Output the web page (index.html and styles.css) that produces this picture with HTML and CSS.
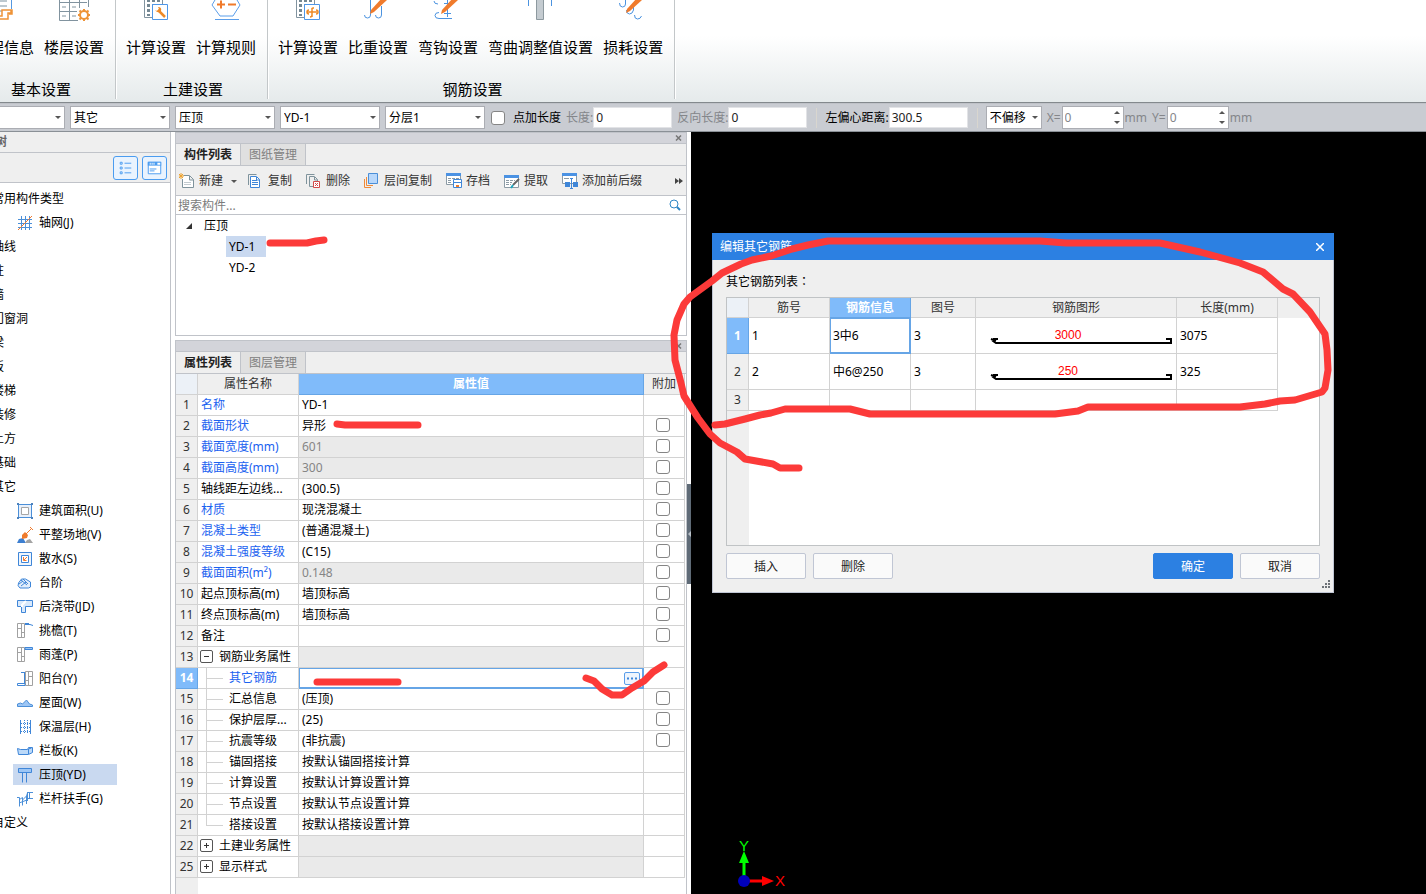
FILE: index.html
```html
<!DOCTYPE html>
<html lang="zh-CN">
<head>
<meta charset="utf-8">
<title>构件属性</title>
<link rel="stylesheet" href="styles.css">
</head>
<body>
<div class="app">
  <header class="ribbon">
    <section class="ribbon-group ribbon-group-first">
      <div class="ribbon-tools">
        <button class="ribbon-tool"><svg class="ribbon-icon" viewBox="0 0 32 21"><path d="M6 1h13M6 6h13M6 11h9" fill="none" stroke="#7d929f"/><path d="M2.500 0V17.500H14M23.500 0v9" fill="none" stroke="#5598e0"/><path d="M14 10h9v3h-3v6h-9v-3h3z M21 10h3v4h-3" fill="#fff" stroke="#ee9337" stroke-width="1.500"/></svg>工程信息</button>
        <button class="ribbon-tool"><svg class="ribbon-icon" viewBox="0 0 32 21"><path d="M1.500 0V20.500H20M11.500 0V20M30.500 0V7M21.500 0V8M1 2.500h28M1 11.500h18M4 7h4M4 16h4M14 7h4M14 16h4" fill="none" stroke="#81939f"/><circle cx="26" cy="15" r="4" fill="#fff" stroke="#ee9337" stroke-width="2"/><path d="M26 9v2M26 19v2M20 15h2M30 15h2M21.500 10.500l1.500 1.500M29 18l1.500 1.500M30.500 10.500L29 12M23 18l-1.500 1.500" stroke="#ee9337" stroke-width="2"/></svg>楼层设置</button>
      </div>
      <h2 class="ribbon-caption">基本设置</h2>
    </section>
    <section class="ribbon-group">
      <div class="ribbon-tools">
        <button class="ribbon-tool"><svg class="ribbon-icon" viewBox="0 0 32 21"><path d="M4.500 0V17.500H12M22.500 0V5" fill="none" stroke="#81939f"/><path d="M7 0h3v2H7zM12 0h3v2h-3zM17 0h3v2h-3zM7 4h3v3H7zM12 4h3v3h-3zM17 4h3v1h-3zM7 9h3v3H7zM7 14h3v2H7z" fill="#748792"/><path d="M12.500 4.500h15v15h-15z" fill="#fff" stroke="#4f97e8"/><path d="M18 10l7 7" stroke="#ee8a27" stroke-width="2.500"/><path d="M15 10l2 1 2-2-1-2q4 0 3 4-3 3-6-1z" fill="#ee8a27"/></svg>计算设置</button>
        <button class="ribbon-tool"><svg class="ribbon-icon" viewBox="0 0 32 21"><path d="M5 0l-3 5 8 11h13l7-11-3-5M5 19.500h24" fill="none" stroke="#5b9eea"/><path d="M7 4.500h8M11 .5v8M18 4.500h8" stroke="#f07a2b" stroke-width="2"/></svg>计算规则</button>
      </div>
      <h2 class="ribbon-caption">土建设置</h2>
    </section>
    <section class="ribbon-group">
      <div class="ribbon-tools">
        <button class="ribbon-tool"><svg class="ribbon-icon" viewBox="0 0 32 21"><path d="M4.500 0V17.500H12M22.500 0V5" fill="none" stroke="#81939f"/><path d="M7 0h3v2H7zM12 0h3v2h-3zM17 0h3v2h-3zM7 4h3v3H7zM12 4h3v3h-3zM17 4h3v1h-3zM7 9h3v3H7zM7 14h3v2H7z" fill="#748792"/><path d="M12.500 4.500h15v15h-15z" fill="#fff" stroke="#4f97e8"/><path d="M20 8v9M22 8h-1q-1 0-1 1M20 15q0 2-2 2M15 12h10M17 10q-2 0-2 2t2 2M24 10q2 0 2 2t-2 2" fill="none" stroke="#ee8a27" stroke-width="1.500"/></svg>计算设置</button>
        <button class="ribbon-tool"><svg class="ribbon-icon" viewBox="0 0 32 21"><path d="M8.500 0v15q0 3-3 3t-3-3M19.500 6v9q0 3-3 3t-3-3" fill="none" stroke="#4b93e0"/><path d="M20-2l5 2L12 12l-4 2 1-4z" fill="#f07b2c"/></svg>比重设置</button>
        <button class="ribbon-tool"><svg class="ribbon-icon" viewBox="0 0 32 21"><path d="M6 4q-4 0-4-3M7 12.500q-4 0-4 3t4 3h13M15.500 0v17M12 3.500h7M12 13.500h7" fill="none" stroke="#4b93e0"/><path d="M21-2l5 2L13 12l-4 2 1-4z" fill="#f07b2c"/></svg>弯钩设置</button>
        <button class="ribbon-tool"><svg class="ribbon-icon" viewBox="0 0 32 21"><path d="M3.500 0v6M26.500 0v6" stroke="#4b93e0"/><path d="M11.500-2h7v21.500h-7z" fill="#c4cbd0" stroke="#8d999f"/></svg>弯曲调整值设置</button>
        <button class="ribbon-tool"><svg class="ribbon-icon" viewBox="0 0 32 21"><path d="M2.500 3q0 4 3 4t3-3V0M9.500 10q0 4 3 4t4-4V7M17.500 15q0 4 3 4t4-3" fill="none" stroke="#4b93e0"/><path d="M20-2l5 2L13 11l-4 2 1-4z" fill="#f07b2c"/></svg>损耗设置</button>
      </div>
      <h2 class="ribbon-caption">钢筋设置</h2>
    </section>
  </header>

  <form class="options">
    <label class="combo combo-first"><select aria-label="楼层"><option></option></select></label>
    <label class="combo"><select aria-label="类别"><option>其它</option></select></label>
    <label class="combo"><select aria-label="构件类型"><option>压顶</option></select></label>
    <label class="combo"><select aria-label="构件"><option>YD-1</option></select></label>
    <label class="combo"><select aria-label="分层"><option>分层1</option></select></label>
    <label class="option-check"><input class="box" type="checkbox">点加长度</label>
    <label class="option-field muted">长度:<input value="0"></label>
    <label class="option-field muted">反向长度:<input value="0"></label>
    <span class="option-rule"></span>
    <label class="option-field">左偏心距离:<input value="300.5"></label>
    <span class="option-rule"></span>
    <label class="combo combo-short"><select aria-label="偏移"><option>不偏移</option></select></label>
    <label class="option-spin muted">X=<span class="spin"><input value="0"></span>mm</label>
    <label class="option-spin muted">Y=<span class="spin"><input value="0"></span>mm</label>
  </form>

  <main class="workspace">
    <aside class="nav">
      <h2 class="nav-title">导航树</h2>
      <div class="nav-views">
        <button class="view-button" aria-label="列表"><svg viewBox="0 0 24 24"><path d="M6.500 5.500h2v2h-2zM6.500 10.500h2v2h-2zM6.500 15.500h2v2h-2z" fill="none" stroke="#4a9cf0"/><path d="M11 6.500h7M11 11.500h7M11 16.500h7" stroke="#4a9cf0"/></svg></button>
        <button class="view-button" aria-label="面板"><svg viewBox="0 0 24 24"><path d="M5.500 5.500h13v12h-13z" fill="#fff" stroke="#4a9cf0"/><path d="M5 5h14v4H5z" fill="#4a9cf0"/><path d="M7 7h1M9 7h1M11 7h1M15 7h3" stroke="#fff" stroke-width="2"/><path d="M7 12.500h7M7 14.500h5" stroke="#4a9cf0"/></svg></button>
      </div>
      <ul class="nav-tree">
        <li class="nav-root">常用构件类型</li>
        <li><a class="nav-item" href="#"><svg viewBox="0 0 16 16"><path d="M4.500 1v14M8.500 1v14M12.500 1v14M1 4.500h14M1 8.500h14M1 12.500h14" stroke="#4b8fd8"/><path d="M1 15L15 1" stroke="#ef7b31"/></svg>轴网(J)</a></li>
        <li class="nav-root">轴线</li>
        <li class="nav-root">柱</li>
        <li class="nav-root">墙</li>
        <li class="nav-root">门窗洞</li>
        <li class="nav-root">梁</li>
        <li class="nav-root">板</li>
        <li class="nav-root">楼梯</li>
        <li class="nav-root">装修</li>
        <li class="nav-root">土方</li>
        <li class="nav-root">基础</li>
        <li class="nav-root">其它</li>
        <li><a class="nav-item" href="#"><svg viewBox="0 0 16 16"><path d="M1.500 1.500h13v13h-13z" fill="#e8f0fb" stroke="#4b8fd8"/><path d="M4.500 4.500h7v7h-7z" fill="#fff" stroke="#a6a6a6"/><path d="M0 0h2v2H0zM14 0h2v2h-2zM0 14h2v2H0zM14 14h2v2h-2z" fill="#4d82bd"/></svg>建筑面积(U)</a></li>
        <li><a class="nav-item" href="#"><svg viewBox="0 0 16 16"><path d="M0 16l2-4 4-1 3 5z" fill="#3d7fd0"/><path d="M8 16l2-3 3-1 3 4z" fill="#a3a3a3"/><path d="M5 8l3-3 3 3-1 3-5 1z" fill="#f07b2c"/><path d="M9 7l5-5M13 0l3 3" stroke="#f07b2c"/></svg>平整场地(V)</a></li>
        <li><a class="nav-item" href="#"><svg viewBox="0 0 16 16"><path d="M1.500 1.500h13v13h-13z" fill="#eef5fd" stroke="#3f86d8"/><path d="M4.500 4.500h7v7h-7z" fill="#fff" stroke="#3f86d8"/><path d="M10 6L7 9M6.500 6v3.500h3" fill="none" stroke="#ef7b31"/></svg>散水(S)</a></li>
        <li><a class="nav-item" href="#"><svg viewBox="0 0 16 16"><path d="M1.500 8l3-4h4l5 3v5l-2 1H3q-3-2-1.500-5zM4 5l6 5M6 4l5 5M2 9l4-3M4 11l5-4" fill="#e2eefb" stroke="#3f86d8"/></svg>台阶</a></li>
        <li><a class="nav-item" href="#"><svg viewBox="0 0 16 16"><path d="M.5 1.500h15v6H8.500v6h-4v-6h-4z" fill="#d9e9fb" stroke="#3f86d8"/><path d="M9 2L5 6v2" fill="none" stroke="#fff" stroke-width="2"/></svg>后浇带(JD)</a></li>
        <li><a class="nav-item" href="#"><svg viewBox="0 0 16 16"><path d="M.5.5h7v14h-7zM4.500 0v15M1 5.500h3M4 9.500h3" fill="none" stroke="#a1a1a1"/><path d="M8 1.500h5l3 1M8 .5h4" fill="none" stroke="#3f86d8"/></svg>挑檐(T)</a></li>
        <li><a class="nav-item" href="#"><svg viewBox="0 0 16 16"><path d="M.5.5h7v14h-7zM4.500 0v15M1 5.500h3M4 9.500h3" fill="none" stroke="#a1a1a1"/><path d="M8 .5h7.500v2H8z" fill="#9dc6f5" stroke="#3f86d8"/></svg>雨蓬(P)</a></li>
        <li><a class="nav-item" href="#"><svg viewBox="0 0 16 16"><path d="M8.500.5h7v14h-7zM11.500 0v15M12 5.500h3M8 9.500h3" fill="none" stroke="#a1a1a1"/><path d="M4 1.500h4M.5 12.500H8v2H.5zM7.500 2v11" fill="none" stroke="#3f86d8"/></svg>阳台(Y)</a></li>
        <li><a class="nav-item" href="#"><svg viewBox="0 0 16 16"><path d="M.5 11.500V9l3-1 2 1 4-4 3 4 3 1v1.500z" fill="#9dc6f5" stroke="#4b8fd8"/></svg>屋面(W)</a></li>
        <li><a class="nav-item" href="#"><svg viewBox="0 0 16 16"><path d="M3.500 1v14M13.500 1v14" stroke="#3f86d8"/><path d="M7.500 1v14M10.500 1v14M4 4.500h9M4 8.500h9M4 12.500h9" stroke="#3f86d8" stroke-dasharray="1 1"/></svg>保温层(H)</a></li>
        <li><a class="nav-item" href="#"><svg viewBox="0 0 16 16"><path d="M.5 5.500l3 1h7l1-2h4v5l-4 2h-10zM11.500 11V6l3-1" fill="#bcd9f8" stroke="#3f86d8"/></svg>栏板(K)</a></li>
        <li><a class="nav-item nav-item-on" href="#"><svg viewBox="0 0 16 16"><path d="M1.500 1.500h13v4h-13z" fill="#9dc6f5" stroke="#3f86d8"/><path d="M5.500 6v9.500M9.500 6v9.500" stroke="#3f86d8"/></svg>压顶(YD)</a></li>
        <li><a class="nav-item" href="#"><svg viewBox="0 0 16 16"><path d="M0 6.500h2.500v9M2.500 8.500l3-2v8M5.500 9l4-4v8M9.500 5l1-3v8M10 1.500h6M12.500 2v6M10 7.500h6M2 12l8-3" fill="none" stroke="#4b8fd8"/></svg>栏杆扶手(G)</a></li>
        <li class="nav-root">自定义</li>
      </ul>
    </aside>

    <div class="docks">
      <section class="dock dock-list">
        <div class="dock-bar"><button class="dock-close" aria-label="关闭"><svg viewBox="0 0 7 6"><path d="M1 .5l5 5M6 .5l-5 5" stroke="#777" stroke-width="1.500"/></svg></button></div>
        <div class="tabs"><button class="tab tab-on">构件列表</button><button class="tab">图纸管理</button></div>
        <div class="tools">
          <button class="tool tool-new"><svg viewBox="0 0 16 16"><path d="M4.500 2.500h6l4 4v8H3.500V6M10.500 3v4h4" fill="#fff" stroke="#7f939c"/><path d="M5 9.500h7M5 11.500h7" stroke="#c2cacf"/><path d="M0 1l4 4M4 1L0 5M2 0v6M0 3h5" stroke="#eea32f"/></svg>新建<i class="caret"></i></button>
          <button class="tool"><svg viewBox="0 0 16 16"><path d="M.5 12V1.500h8" fill="none" stroke="#7f939c"/><path d="M2.500 3.500h6l3 3v8h-9z" fill="#fff" stroke="#3f86d8"/><path d="M4 7.500h5M4 9.500h6M4 11.500h6M8.500 4v3h3" fill="none" stroke="#3f86d8"/></svg>复制</button>
          <button class="tool"><svg viewBox="0 0 16 16"><path d="M.5 11V1.500h8M7 13.500H3.500v-10h5l3 3V8M8.500 4v3h3" fill="none" stroke="#7f939c"/><path d="M7.500 8.500h6v6h-6z" fill="#fff" stroke="#d44a4a"/><path d="M9 10l3 3M12 10l-3 3" stroke="#d44a4a"/></svg>删除</button>
          <button class="tool"><svg viewBox="0 0 16 16"><path d="M4.500.5h9v10h-9z" fill="#b9d8fb" stroke="#4b8fd8"/><path d="M2.500 4v8.500H9M.5 6v8.500H7" fill="none" stroke="#ee8a3a"/></svg>层间复制</button>
          <button class="tool"><svg viewBox="0 0 16 16"><path d="M.5.500h14v11h-14z" fill="#fff" stroke="#8c9ba5"/><path d="M0 0h15v3H0z" fill="#4b92e3"/><path d="M2 5.500h11M2 7.500h4M2 9.500h4" stroke="#8c9ba5" stroke-dasharray="3 1"/><path d="M7.500 6.500h8v8h-8z" fill="#fff" stroke="#3f86d8"/><path d="M8 9.500h7" stroke="#3f86d8"/><path d="M10 12h3v2h-3z" fill="#ee7b2b"/></svg>存档</button>
          <button class="tool"><svg viewBox="0 0 16 16"><path d="M.5 2.500h14v12H.5z" fill="#fff" stroke="#8c9ba5"/><path d="M0 2h15v3H0z" fill="#4b92e3"/><path d="M2 7.500h9M2 9.500h6M2 11.500h5" stroke="#8c9ba5" stroke-dasharray="3 1"/><path d="M15 6l-6 6" stroke="#666" stroke-width="2"/><path d="M9 12l-2 3" stroke="#1ea7c0" stroke-width="2"/></svg>提取</button>
          <button class="tool"><svg viewBox="0 0 16 16"><path d="M.5.500h14v10h-14z" fill="#fff" stroke="#8c9ba5"/><path d="M0 0h15v3H0z" fill="#4b92e3"/><path d="M2 5.500h5" stroke="#8c9ba5"/><path d="M3 9h5v5H3zM11 9h5v5h-5z" fill="#3f86d8"/><path d="M9.500 6v9M8 5.500h3M8 15.500h3" stroke="#3f86d8"/></svg>添加前后缀</button>
          <button class="more" aria-label="更多"><svg viewBox="0 0 8 6"><path d="M0 0l4 3-4 3zM4 0l4 3-4 3z" fill="#444"/></svg></button>
        </div>
        <label class="search"><input placeholder="搜索构件..." aria-label="搜索构件"><svg viewBox="0 0 12 12"><circle cx="5" cy="5" r="4" fill="none" stroke="#2f86c5"/><path d="M8 8l3 3" stroke="#2f86c5" stroke-width="2"/></svg></label>
        <ul class="parts">
          <li class="parts-root"><svg viewBox="0 0 6 6"><path d="M6 0v6H0z" fill="#333"/></svg>压顶</li>
          <li><button class="part part-on">YD-1</button></li>
          <li><button class="part">YD-2</button></li>
        </ul>
      </section>

      <section class="dock dock-props">
        <div class="dock-bar"><button class="dock-close" aria-label="关闭"><svg viewBox="0 0 7 6"><path d="M1 .5l5 5M6 .5l-5 5" stroke="#777" stroke-width="1.500"/></svg></button></div>
        <div class="tabs"><button class="tab tab-on">属性列表</button><button class="tab">图层管理</button></div>
        <div class="props-wrap">
          <table class="props">
            <colgroup><col class="col-num"><col class="col-name"><col><col class="col-extra"></colgroup>
            <thead><tr><th class="corner"></th><th>属性名称</th><th class="head-on">属性值</th><th>附加</th></tr></thead>
            <tbody>
              <tr><th>1</th><td class="key">名称</td><td>YD-1</td><td></td></tr>
              <tr><th>2</th><td class="key">截面形状</td><td>异形</td><td><input class="box" type="checkbox" aria-label="截面形状"></td></tr>
              <tr><th>3</th><td class="key">截面宽度(mm)</td><td class="locked">601</td><td><input class="box" type="checkbox" aria-label="截面宽度"></td></tr>
              <tr><th>4</th><td class="key">截面高度(mm)</td><td class="locked">300</td><td><input class="box" type="checkbox" aria-label="截面高度"></td></tr>
              <tr><th>5</th><td>轴线距左边线...</td><td>(300.5)</td><td><input class="box" type="checkbox" aria-label="轴线距左边线"></td></tr>
              <tr><th>6</th><td class="key">材质</td><td>现浇混凝土</td><td><input class="box" type="checkbox" aria-label="材质"></td></tr>
              <tr><th>7</th><td class="key">混凝土类型</td><td>(普通混凝土)</td><td><input class="box" type="checkbox" aria-label="混凝土类型"></td></tr>
              <tr><th>8</th><td class="key">混凝土强度等级</td><td>(C15)</td><td><input class="box" type="checkbox" aria-label="混凝土强度等级"></td></tr>
              <tr><th>9</th><td class="key">截面面积(m²)</td><td class="locked">0.148</td><td><input class="box" type="checkbox" aria-label="截面面积"></td></tr>
              <tr><th>10</th><td>起点顶标高(m)</td><td>墙顶标高</td><td><input class="box" type="checkbox" aria-label="起点顶标高"></td></tr>
              <tr><th>11</th><td>终点顶标高(m)</td><td>墙顶标高</td><td><input class="box" type="checkbox" aria-label="终点顶标高"></td></tr>
              <tr><th>12</th><td>备注</td><td></td><td><input class="box" type="checkbox" aria-label="备注"></td></tr>
              <tr><th>13</th><td class="fold"><button class="toggle" aria-label="收起"><svg viewBox="0 0 11 11"><path d="M3 5.500h5" stroke="#333"/></svg></button>钢筋业务属性</td><td class="locked"></td><td></td></tr>
              <tr><th class="num-on">14</th><td class="sub key">其它钢筋</td><td class="active"><button class="dots" aria-label="编辑"><svg viewBox="0 0 14 11"><path d="M2 5.500h2M6 5.500h2M10 5.500h2" stroke="#3f86d8" stroke-width="2"/></svg></button></td><td></td></tr>
              <tr><th>15</th><td class="sub">汇总信息</td><td>(压顶)</td><td><input class="box" type="checkbox" aria-label="汇总信息"></td></tr>
              <tr><th>16</th><td class="sub">保护层厚...</td><td>(25)</td><td><input class="box" type="checkbox" aria-label="保护层厚度"></td></tr>
              <tr><th>17</th><td class="sub">抗震等级</td><td>(非抗震)</td><td><input class="box" type="checkbox" aria-label="抗震等级"></td></tr>
              <tr><th>18</th><td class="sub">锚固搭接</td><td>按默认锚固搭接计算</td><td></td></tr>
              <tr><th>19</th><td class="sub">计算设置</td><td>按默认计算设置计算</td><td></td></tr>
              <tr><th>20</th><td class="sub">节点设置</td><td>按默认节点设置计算</td><td></td></tr>
              <tr><th>21</th><td class="sub sub-last">搭接设置</td><td>按默认搭接设置计算</td><td></td></tr>
              <tr><th>22</th><td class="fold"><button class="toggle" aria-label="展开"><svg viewBox="0 0 11 11"><path d="M3 5.500h5M5.500 3v5" stroke="#333"/></svg></button>土建业务属性</td><td class="locked"></td><td></td></tr>
              <tr><th>25</th><td class="fold"><button class="toggle" aria-label="展开"><svg viewBox="0 0 11 11"><path d="M3 5.500h5M5.500 3v5" stroke="#333"/></svg></button>显示样式</td><td class="locked"></td><td></td></tr>
            </tbody>
          </table>
          <div class="props-rest"></div>
        </div>
      </section>
      <button class="splitter" aria-label="收起面板"><svg viewBox="0 0 4 8"><path d="M4 1v6L1 4z" fill="#b8c0c8"/></svg></button>
    </div>

    <section class="canvas">
      <svg class="axes" viewBox="0 0 50 54"><path d="M7 43V22" stroke="#0f0" stroke-width="3"/><path d="M7 13l5 12H2z" fill="#0f0"/><path d="M7 43h20" stroke="#f00" stroke-width="3"/><path d="M37 43l-12 5V38z" fill="#f00"/><circle cx="7" cy="43" r="6" fill="#00b"/><text class="axis-y" x="7" y="13">Y</text><text class="axis-x" x="43" y="48">X</text></svg>

      <div class="dialog" role="dialog" aria-label="编辑其它钢筋">
        <header class="dialog-title"><span>编辑其它钢筋</span><button class="dialog-close" aria-label="关闭"><svg viewBox="0 0 8 8"><path d="M0 0l8 8M8 0L0 8" stroke="#fff" stroke-width="1.500"/></svg></button></header>
        <div class="dialog-body">
          <p class="dialog-label">其它钢筋列表<span lang="zh-TW">：</span></p>
          <div class="bars-wrap">
            <table class="bars">
              <colgroup><col class="bar-num"><col class="bar-id"><col class="bar-info"><col class="bar-fig"><col class="bar-shape"><col class="bar-len"><col></colgroup>
              <thead><tr><th class="corner"></th><th>筋号</th><th class="head-on">钢筋信息</th><th>图号</th><th>钢筋图形</th><th>长度(mm)</th><th class="blank"></th></tr></thead>
              <tbody>
                <tr class="tall"><th class="num-on">1</th><td>1</td><td class="active">3中6</td><td>3</td><td class="shape"><svg viewBox="0 0 200 35"><path d="M15 21l5 2M22 21h-4l-1 2 3 2h175v-4h-5" fill="none" stroke="#000" stroke-width="2"/><text x="92" y="21">3000</text></svg></td><td>3075</td><td class="blank"></td></tr>
                <tr class="tall"><th>2</th><td>2</td><td>中6@250</td><td>3</td><td class="shape"><svg viewBox="0 0 200 35"><path d="M15 21l5 2M22 21h-4l-1 2 3 2h175v-4h-5" fill="none" stroke="#000" stroke-width="2"/><text x="92" y="21">250</text></svg></td><td>325</td><td class="blank"></td></tr>
                <tr><th>3</th><td></td><td></td><td></td><td></td><td></td><td class="blank"></td></tr>
              </tbody>
            </table>
            <div class="bars-rest"></div>
          </div>
          <footer class="dialog-actions">
            <button class="btn">插入</button><button class="btn">删除</button>
            <span class="spacer"></span>
            <button class="btn btn-main">确定</button><button class="btn">取消</button>
          </footer>
        </div>
        <svg class="grip" viewBox="0 0 9 9"><path d="M6 1h2M3 4h2M6 4h2M0 7h2M3 7h2M6 7h2" stroke="#6d7278" stroke-width="2"/></svg>
      </div>
    </section>
  </main>

  <svg class="marks">
    <path d="M270 243H307L316 241L324 240"/>
    <path d="M337 424L345 425H418"/>
    <path d="M317 682H398"/>
    <path d="M586 678L594 681L602 689L612 695H622L632 688L644 681L653 672L664 665"/>
    <path d="M799 468H780L773 464L745 459L737 452L720 443L710 434L698 418L684 396L681 383L675 360L674 335L677 320L684 304L690 297L712 281L722 273L741 264L752 260L771 256L792 249L808 245L828 241H1040L1066 243H1160L1200 252L1240 263L1263 272L1283 289L1293 294L1310 312L1325 334L1327 350L1328 370L1325 388L1322 392L1295 400L1280 401L1265 404L1240 407H1088L1078 411L1055 414H870L850 409H785L771 413L760 415L745 419L725 424L715 425"/>
  </svg>
</div>
</body>
</html>
```
FILE: styles.css
```css
* { box-sizing: border-box; }
body {
  margin: 0;
  font: 12px/20px "Noto Sans", "Noto Sans CJK SC", sans-serif;
  color: #000;
  background: #fff;
}
button, input, select { font: inherit; color: inherit; margin: 0; }
button { padding: 0; border: 0; background: none; }
a { color: inherit; text-decoration: none; }
ul { list-style: none; margin: 0; padding: 0; }
h2, p { margin: 0; font-size: 12px; }
svg { display: block; flex: none; }

.app {
  position: relative;
  display: flex;
  flex-direction: column;
  height: 100vh;
  overflow: hidden;
}

/* Ribbon */
.ribbon {
  display: flex;
  flex: none;
  padding-bottom: 3px;
  border-bottom: 1px solid #83898d;
  background: linear-gradient(#fff 35%, #e5eaeb);
}
.ribbon-group {
  display: flex;
  flex-direction: column;
  align-items: center;
  padding: 0 6px 0 5px;
  border-right: 1px solid #c3c7c9;
  box-shadow: 1px 0 #fff;
}
.ribbon-group-first { margin-left: -36px; }
.ribbon-tools { display: flex; }
.ribbon-tool {
  display: flex;
  flex-direction: column;
  align-items: center;
  gap: 15px;
  padding: 0 5px;
  font-size: 15px;
  line-height: 22px;
  white-space: nowrap;
}
.ribbon-icon { width: 32px; height: 21px; }
.ribbon-caption {
  margin-top: 21px;
  padding-left: 4px;
  font-size: 15px;
  font-weight: 400;
  line-height: 20px;
}

/* Option bar */
.options {
  display: flex;
  flex: none;
  align-items: center;
  height: 29px;
  border-top: 1px solid #bfc2c8;
  border-bottom: 1px solid #8a9096;
  background: #c9ccd2;
  white-space: nowrap;
}
.combo { position: relative; flex: none; width: 100px; margin-right: 5px; }
.combo-first { margin-left: -35px; }
.combo-short { width: 56px; }
.combo select {
  display: block;
  width: 100%;
  height: 23px;
  padding: 0 3px;
  border: 1px solid #abadb3;
  border-radius: 0;
  background: #fff;
  appearance: none;
}
.combo::after, .caret {
  content: "";
  border: 3px solid transparent;
  border-top-color: #555;
  border-bottom: 0;
}
.combo::after { position: absolute; right: 4px; top: 10px; }
.box {
  display: block;
  flex: none;
  width: 14px;
  height: 14px;
  border: 1px solid #858585;
  border-radius: 3px;
  background: #fff;
  appearance: none;
}
.option-check { display: flex; align-items: center; gap: 8px; margin: 0 5px 0 1px; }
.option-field, .option-spin { display: flex; align-items: center; margin-right: 5px; }
.option-spin { gap: 1px; }
.option-field input, .spin input {
  width: 79px;
  height: 21px;
  padding: 0 2px;
  border: 1px solid #e2e3e6;
  border-radius: 0;
  background: #fff;
  color: #222;
}
.muted { color: #84868a; }
.option-rule { width: 1px; height: 20px; margin: 0 8px 0 4px; background: #d9d6cf; }
.spin { position: relative; }
.spin input { display: block; width: 62px; height: 23px; border-color: #abadb3; color: #84868a; }
.spin::before, .spin::after {
  content: "";
  position: absolute;
  right: 4px;
  border: 3px solid transparent;
}
.spin::before { top: 5px; border-top: 0; border-bottom-color: #555; }
.spin::after { bottom: 5px; border-bottom: 0; border-top-color: #555; }

.workspace { display: flex; flex: 1; min-height: 0; }

/* Navigation tree */
.nav {
  flex: none;
  width: 171px;
  border-right: 1px solid #c0c3c9;
  overflow: hidden;
}
.nav-title {
  height: 21px;
  margin-left: -29px;
  border-bottom: 1px solid #c0c3c9;
  background: #efefef;
  color: #666;
}
.nav-views {
  display: flex;
  justify-content: flex-end;
  gap: 4px;
  height: 30px;
  padding: 3px 3px 2px;
  border-bottom: 1px solid #c0c3c9;
  background: #efefef;
}
.view-button {
  width: 25px;
  border: 1px solid #4a9cf0;
  border-radius: 3px;
  background: #e9f3fe;
}
.nav-tree { padding-top: 3px; line-height: 22px; }
.nav-tree li { display: flex; align-items: center; height: 24px; }
.nav-tree .nav-root { margin-left: -8px; padding-top: 2px; }
.nav-item {
  display: flex;
  align-items: center;
  gap: 6px;
  width: 104px;
  height: 21px;
  margin-left: 13px;
  padding: 1px 4px 0;
  white-space: nowrap;
}
.nav-item svg { width: 16px; height: 16px; }
.nav-item-on { background: #c9d9f0; }

/* Docked panels */
.docks {
  position: relative;
  display: flex;
  flex: none;
  flex-direction: column;
  gap: 4px;
  width: 520px;
  padding: 0 4px;
}
.dock { display: flex; flex-direction: column; border: 1px solid #c0c3c9; }
.dock-list { height: 204px; flex: none; }
.dock-props { flex: 1; min-height: 0; border-bottom: 0; }
.dock-bar {
  display: flex;
  align-items: center;
  justify-content: flex-end;
  flex: none;
  height: 11px;
  padding-right: 4px;
  border-bottom: 1px solid #c0c3c9;
  background: #d3d4da;
}
.dock-close svg { width: 7px; height: 6px; }
.tabs {
  display: flex;
  flex: none;
  height: 22px;
  border-bottom: 1px solid #c0c3c9;
  background: #efefef;
}
.tab {
  width: 65px;
  border-right: 1px solid #c0c3c9;
  background: #e0e0e0;
  color: #808080;
}
.tab-on { background: #efefef; color: #222; font-weight: 700; }
.tools {
  display: flex;
  flex: none;
  align-items: center;
  gap: 14px;
  height: 30px;
  padding: 0 3px;
  border-bottom: 1px solid #c0c3c9;
  background: #efefef;
  color: #333;
}
.tool { display: flex; align-items: center; gap: 4px; white-space: nowrap; }
.tool svg { width: 16px; height: 16px; }
.caret { margin: 2px 0 0 4px; }
.tool-new { margin-right: -3px; }
.more { margin-left: auto; }
.more svg { width: 8px; height: 6px; }
.search {
  display: flex;
  flex: none;
  align-items: center;
  height: 19px;
  padding: 0 5px 0 2px;
  border-bottom: 1px solid #c0c3c9;
}
.search input { flex: 1; height: 18px; padding: 1px 0 0; border: 0; outline: 0; }
.search input::placeholder { color: #7b7b7b; }
.search svg { width: 12px; height: 12px; }
.parts { line-height: 21px; }
.parts-root { display: flex; align-items: center; gap: 12px; padding-left: 10px; }
.parts-root svg { width: 6px; height: 6px; }
.part { display: block; width: 40px; height: 21px; margin-left: 50px; padding-left: 3px; text-align: left; }
.part-on { background: #c9d9f0; }

/* Property table */
.props-wrap {
  display: flex;
  flex: 1;
  flex-direction: column;
  min-height: 0;
  margin-right: 1px;
}
table { width: 100%; border-collapse: separate; border-spacing: 0; table-layout: fixed; }
th, td {
  height: 21px;
  padding: 0 3px;
  border: solid #d2d2d2;
  border-width: 0 1px 1px 0;
  line-height: 20px;
  white-space: nowrap;
  text-align: left;
}
th { padding: 0; background: #efefef; color: #333; font-weight: 400; text-align: center; }
.corner { background: #ecf1f7; }
.head-on, .num-on {
  border-color: #66a5e6;
  background: #80bbfa;
  color: #fff;
  font-weight: 700;
}
.col-num { width: 22px; }
.col-name { width: 101px; }
.col-extra { width: 41px; }
.key { color: #1b62f0; }
.locked { background: #eaeaea; color: #858585; }
.props td:last-child { padding: 0 12px 2px; }
.fold { padding-left: 2px; }
.toggle {
  display: inline-block;
  width: 13px;
  height: 13px;
  margin-right: 6px;
  border: 1px solid #555;
  border-radius: 2px;
  line-height: 11px;
  vertical-align: -1px;
}
.sub {
  padding-left: 31px;
  background:
    linear-gradient(#d2d2d2, #d2d2d2) 8px 0 / 1px 100% no-repeat,
    linear-gradient(#d2d2d2, #d2d2d2) 9px 10px / 16px 1px no-repeat;
}
.sub-last {
  background:
    linear-gradient(#d2d2d2, #d2d2d2) 8px 0 / 1px 11px no-repeat,
    linear-gradient(#d2d2d2, #d2d2d2) 9px 10px / 16px 1px no-repeat;
}
.active { box-shadow: inset 0 0 0 1px #66a5e6; border-color: #66a5e6; }
.dots {
  display: block;
  width: 16px;
  height: 13px;
  margin-left: auto;
  border: 1px solid #5b9eea;
  border-radius: 2px;
  background: #eef5fd;
}
.props-rest, .bars-rest { flex: 1; width: 22px; background: #efefef; }
.splitter {
  position: absolute;
  right: 0;
  top: 352px;
  width: 4px;
  height: 100px;
  background: #5f6b77;
}

/* Drawing area */
.canvas { position: relative; flex: 1; min-width: 0; background: #000; }
.axes { position: absolute; left: 46px; bottom: 2px; width: 50px; height: 54px; }
.axes text { font: 15px "Liberation Sans", sans-serif; text-anchor: middle; }
.axis-y { fill: #0f0; }
.axis-x { fill: #f00; }

.dialog {
  position: absolute;
  left: 21px;
  top: 101px;
  width: 622px;
  border: 1px solid #c0c6d4;
  border-top: 0;
  background: #efefef;
}
.dialog-title {
  display: flex;
  align-items: center;
  justify-content: space-between;
  height: 27px;
  margin: 0 -1px;
  padding: 0 10px 0 8px;
  background: #2c80e2;
  color: #fff;
}
.dialog-close svg { width: 8px; height: 8px; }
.dialog-body { padding: 12px 13px 13px; }
.dialog-label { line-height: 20px; }
.dialog-label span { font-family: "Noto Sans CJK TC", sans-serif; line-height: 1; }
.bars-wrap {
  display: flex;
  flex-direction: column;
  height: 249px;
  margin: 5px 0 7px;
  border: 1px solid #c0c3c5;
  background: #fff;
}
.bar-num { width: 22px; }
.bar-id, .bar-info { width: 81px; }
.bar-fig { width: 65px; }
.bar-shape { width: 201px; }
.bar-len { width: 101px; }
.bars thead th { height: 20px; line-height: 19px; }
.bars .blank { border: 0; }
.tall th, .tall td { height: 36px; }
.bars .shape { padding: 0; }
.shape svg { width: 200px; height: 35px; }
.shape text { font: 12px "Liberation Sans", sans-serif; fill: #f00; text-anchor: middle; }
.dialog-actions { display: flex; gap: 7px; }
.spacer { flex: 1; }
.btn {
  width: 80px;
  height: 26px;
  padding-top: 1px;
  border: 1px solid #c0c6d4;
  border-radius: 2px;
  background: #fafafa;
  color: #222;
}
.btn-main { border-color: #2c80e2; background: #2c80e2; color: #fff; }
.grip { position: absolute; right: 2px; bottom: 3px; width: 9px; height: 9px; }

/* Freehand annotations above the whole window */
.marks {
  position: absolute;
  inset: 0;
  width: 100%;
  height: 100%;
  pointer-events: none;
  fill: none;
  stroke: #fc3a39;
  stroke-width: 7;
  stroke-linecap: round;
  stroke-linejoin: round;
}
```
